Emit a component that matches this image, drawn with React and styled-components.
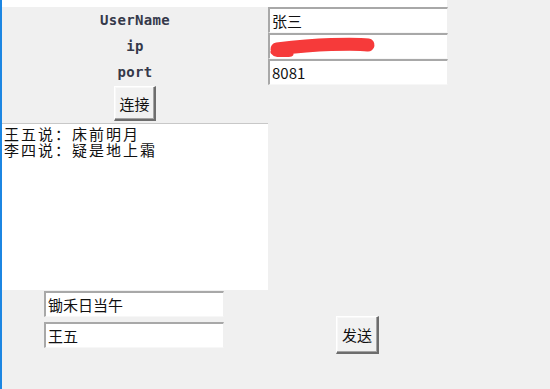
import React from "react";
import styled, { createGlobalStyle } from "styled-components";

const GlobalStyle = createGlobalStyle`
  html, body {
    margin: 0;
    padding: 0;
    background: #f0f0f0;
  }
`;

const App = () => {
  return (
    <>
      <GlobalStyle />
      <Frame>
        <TopStrip />
        <FormGrid>
          <Label>UserName</Label>
          <Field defaultValue="张三" readOnly />
          <Label>ip</Label>
          <FieldWrap>
            <Field defaultValue="" readOnly />
            {/* redacted ip, brush stroke */}
            <Scribble viewBox="0 0 108 22" width="108" height="22">
              <path
                d="M8 14 C 24 12, 44 10, 62 9.5 C 80 9, 92 9, 99 10"
                stroke="#f63a3a"
                strokeWidth="13"
                strokeLinecap="round"
                fill="none"
              />
              <path
                d="M4 17 C 6 20, 14 21, 22 19"
                stroke="#f63a3a"
                strokeWidth="5"
                strokeLinecap="round"
                fill="none"
              />
            </Scribble>
          </FieldWrap>
          <Label>port</Label>
          <Field defaultValue="8081" readOnly />
        </FormGrid>

        <ConnectRow>
          <Button $w={42} $h={35}>连接</Button>
        </ConnectRow>

        <ChatLog>
          <p>王五说：床前明月</p>
          <p>李四说：疑是地上霜</p>
        </ChatLog>

        <BottomRow>
          <InputStack>
            <Field defaultValue="锄禾日当午" readOnly />
            <Field defaultValue="王五" readOnly />
          </InputStack>
          <SendWrap>
            <Button $w={43} $h={38}>发送</Button>
          </SendWrap>
        </BottomRow>
      </Frame>
    </>
  );
};

const Frame = styled.div`
  width: 548px;
  height: 389px;
  border-left: 2px solid #1c86e2;
  display: flex;
  flex-direction: column;
  background: #f0f0f0;
  overflow: hidden;
`;

const TopStrip = styled.div`
  width: 445px;
  height: 7px;
  background: #ffffff;
  flex: none;
`;

const FormGrid = styled.div`
  display: grid;
  grid-template-columns: 266px 179px;
  grid-auto-rows: 26px;
`;

const Label = styled.div`
  display: flex;
  align-items: center;
  justify-content: center;
  font-family: "DejaVu Sans Mono", monospace;
  font-weight: 600;
  font-size: 14px;
  letter-spacing: 0.3px;
  color: #35394a;
`;

const Field = styled.input`
  box-sizing: border-box;
  width: 180px;
  height: 26px;
  margin: 0;
  padding: 0 2px;
  background: #ffffff;
  border-style: solid;
  border-width: 2px 1px 1px 2px;
  border-color: #a8a8a8 #f0f0f0 #f7f7f7 #a8a8a8;
  font-family: "Noto Sans CJK SC", sans-serif;
  font-size: 15px;
  color: #111;
  outline: none;
`;

const FieldWrap = styled.div`
  position: relative;
`;

const Scribble = styled.svg`
  position: absolute;
  left: 1px;
  top: 2px;
`;

const ConnectRow = styled.div`
  width: 266px;
  display: flex;
  justify-content: center;
  padding-top: 1px;
`;

const Button = styled.button`
  box-sizing: border-box;
  width: ${(p) => p.$w}px;
  height: ${(p) => p.$h}px;
  margin: 0;
  padding: 0;
  background: #f1f1f1;
  border-style: solid;
  border-width: 1px 2px 2px 1px;
  border-color: #ffffff #6d6d6d #6d6d6d #ffffff;
  box-shadow: inset -1px -1px #a3a3a3, inset 1px 1px #f8f8f8;
  font-family: "Noto Sans CJK SC", sans-serif;
  font-size: 15px;
  color: #111;
`;

const ChatLog = styled.div`
  box-sizing: border-box;
  width: 266px;
  height: 167px;
  margin-top: 2px;
  background: #ffffff;
  border-top: 1px solid #c8c8c8;
  padding: 2px 2px;
  font-family: "Noto Sans CJK SC", sans-serif;
  font-size: 15px;
  line-height: 16px;
  letter-spacing: 2px;
  color: #111;

  p {
    margin: 0;
  }
`;

const BottomRow = styled.div`
  display: flex;
  padding-left: 42px;
`;

const InputStack = styled.div`
  display: flex;
  flex-direction: column;
  gap: 5px;
  margin-top: 1px;
`;

const SendWrap = styled.div`
  margin-left: 112px;
  margin-top: 26px;
`;

export default App;
